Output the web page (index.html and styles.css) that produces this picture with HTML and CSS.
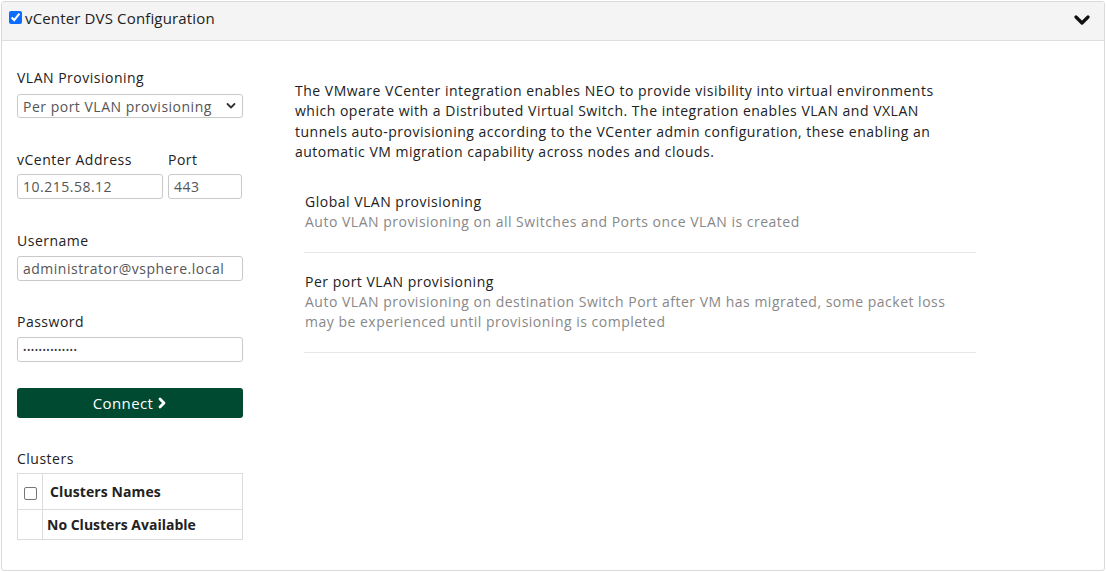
FILE: index.html
```html
<!DOCTYPE html>
<html>
<head>
<meta charset="utf-8">
<link rel="stylesheet" href="styles.css">
</head>
<body>
<div class="card">
  <div class="card-header">
    <label class="header-title"><input type="checkbox" class="header-check" checked> vCenter DVS Configuration</label>
    <svg class="chevron-down" width="16" height="12" viewBox="0 0 16 12"><polyline points="2,3 8,9 14,3" fill="none" stroke="#111" stroke-width="3.2" stroke-linecap="round" stroke-linejoin="round"/></svg>
  </div>
  <div class="card-body">
    <div class="form-col">
      <div class="group group-select">
        <div class="label label-select">VLAN Provisioning</div>
        <div class="select">
          <span>Per port VLAN provisioning</span>
          <svg width="10" height="8" viewBox="0 0 10 8"><polyline points="1.5,2 5,5.5 8.5,2" fill="none" stroke="#333" stroke-width="1.8" stroke-linecap="round" stroke-linejoin="round"/></svg>
        </div>
      </div>
      <div class="group row-group">
        <div class="sub addr">
          <div class="label label-tight">vCenter Address</div>
          <div class="input">10.215.58.12</div>
        </div>
        <div class="sub port">
          <div class="label label-tight">Port</div>
          <div class="input">443</div>
        </div>
      </div>
      <div class="group">
        <div class="label">Username</div>
        <div class="input">administrator@vsphere.local</div>
      </div>
      <div class="group group-pw">
        <div class="label">Password</div>
        <div class="input pw">••••••••••••••</div>
      </div>
      <div class="group">
        <button class="connect">Connect <svg width="10" height="12" viewBox="0 0 10 12"><polyline points="3,2 7,6 3,10" fill="none" stroke="#fff" stroke-width="2.8" stroke-linecap="round" stroke-linejoin="round"/></svg></button>
      </div>
      <div class="clusters">
        <div class="label">Clusters</div>
        <table class="ctable">
          <tr class="thead"><td class="cb"><span class="box"></span></td><td class="th">Clusters Names</td></tr>
          <tr><td class="cb"></td><td class="empty">No Clusters Available</td></tr>
        </table>
      </div>
    </div>
    <div class="info-col">
      <p class="intro">The VMware VCenter integration enables NEO to provide visibility into virtual environments which operate with a Distributed Virtual Switch. The integration enables VLAN and VXLAN tunnels auto-provisioning according to the VCenter admin configuration, these enabling an automatic VM migration capability across nodes and clouds.</p>
      <div class="options">
        <div class="option">
          <div class="opt-title">Global VLAN provisioning</div>
          <div class="opt-desc">Auto VLAN provisioning on all Switches and Ports once VLAN is created</div>
        </div>
        <div class="option">
          <div class="opt-title">Per port VLAN provisioning</div>
          <div class="opt-desc">Auto VLAN provisioning on destination Switch Port after VM has migrated, some packet loss may be experienced until provisioning is completed</div>
        </div>
      </div>
    </div>
  </div>
</div>
</body>
</html>
```
FILE: styles.css
```css
* { box-sizing: border-box; }
html, body { margin: 0; padding: 0; background: #fff; }
body {
  font-family: "Open Sans", "Liberation Sans", sans-serif;
  font-size: 14px;
  letter-spacing: 0.5px;
  color: #222;
  padding: 1px;
}
.card {
  width: 1104px;
  height: 570px;
  border: 1px solid #dadada;
  border-radius: 3px;
  overflow: hidden;
}
.card-header {
  height: 39px;
  background: #f4f4f4;
  border-bottom: 1px solid #dedede;
  display: flex;
  align-items: center;
  justify-content: space-between;
  padding: 0 14px 0 7px;
}
.header-title {
  font-size: 15px;
  letter-spacing: 0.15px;
  display: flex;
  align-items: center;
  color: #222;
  margin-top: -7px;
}
.header-check {
  width: 13px;
  height: 13px;
  margin: 0 3px 0 0;
  accent-color: #0b6cff;
}
.chevron-down { margin-top: -2px; }
.card-body {
  display: flex;
  padding: 27px 15px 0 15px;
}
.form-col {
  width: 226px;
  flex: none;
}
.group { margin-bottom: 31px; }
.group-select { margin-bottom: 32px; }
.row-group { margin-bottom: 32px; }
.group-pw { margin-bottom: 26px; }
.label {
  line-height: 20px;
  margin-bottom: 5px;
  color: #222;
}
.label-select { margin-bottom: 6px; }
.label-tight { margin-bottom: 4px; }
.row-group { display: flex; gap: 5px; }
.addr { width: 146px; }
.port { width: 74px; }
.select, .input {
  height: 25px;
  border: 1px solid #c9c9c9;
  border-radius: 3px;
  padding: 0 5px;
  display: flex;
  align-items: center;
  color: #555;
  font-size: 14px;
}
.select {
  height: 24px;
  justify-content: space-between;
  padding-right: 6px;
}
.pw { letter-spacing: 0.5px; font-size: 9px; color: #333; }
.connect {
  width: 226px;
  height: 30px;
  background: #004a32;
  border: none;
  border-radius: 3px;
  color: #fff;
  font-family: inherit;
  font-size: 15px;
  letter-spacing: 0.4px;
  display: flex;
  align-items: center;
  justify-content: center;
  gap: 4px;
  padding: 0;
}
.clusters .label { margin-bottom: 4px; }
.ctable {
  width: 226px;
  border-collapse: collapse;
  letter-spacing: 0;
}
.ctable td {
  border: 1px solid #dcdcdc;
  padding: 0;
}
.thead td { height: 36px; }
.ctable tr + tr td { height: 30px; }
.cb { width: 25px; text-align: center; }
.box {
  display: inline-block;
  width: 13px;
  height: 13px;
  border: 1px solid #767676;
  border-radius: 2px;
  vertical-align: middle;
}
.th { font-weight: 700; padding-left: 7px !important; letter-spacing: 0.1px; }
.empty { font-weight: 700; padding-left: 4px !important; }
.info-col {
  margin-left: 52px;
  flex: 1;
}
.intro {
  margin: 13px 0 0 0;
  width: 650px;
  line-height: 20.3px;
}
.options {
  margin: 11px 0 0 9px;
  width: 672px;
}
.option {
  padding: 19px 12px 20px 1px;
  border-bottom: 1px solid #e8e8e8;
  line-height: 20px;
}
.opt-title { color: #222; }
.opt-desc { color: #888; }
```
